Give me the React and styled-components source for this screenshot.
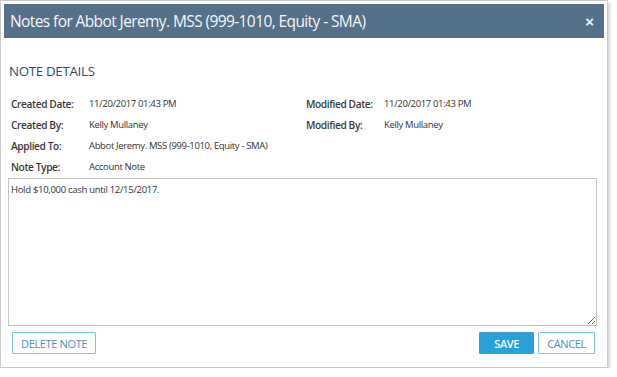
import React, { useState } from 'react';
import styled, { createGlobalStyle } from 'styled-components';

const GlobalStyle = createGlobalStyle`
  html, body {
    margin: 0;
    padding: 0;
    background: #ffffff;
  }
  body {
    font-family: "Open Sans", "Noto Sans", sans-serif;
    color: #333;
  }
`;

const Dialog = styled.div`
  width: 608px;
  height: 368px;
  border: 1px solid #c9c9c9;
  box-shadow: 2px 3px 3px rgba(0, 0, 0, 0.18);
  background: #fff;
  padding: 3px;
  box-sizing: border-box;
  display: flex;
  flex-direction: column;
`;

const Header = styled.div`
  height: 34px;
  background: #557089;
  display: flex;
  align-items: center;
  justify-content: space-between;
  padding: 0 10px 0 6px;
  flex-shrink: 0;
`;

const Title = styled.h1`
  margin: 0;
  font-size: 15.5px;
  font-weight: 400;
  color: #f4f7fa;
  letter-spacing: -0.6px;
`;

const Close = styled.button`
  border: none;
  background: none;
  padding: 0;
  color: #f0f3f6;
  font-size: 15px;
  font-weight: 700;
  cursor: pointer;
  line-height: 1;
`;

const Body = styled.div`
  flex: 1;
  display: flex;
  flex-direction: column;
  padding: 0 7px 0 4px;
`;

const SectionTitle = styled.h2`
  margin: 24px 0 13px 1px;
  font-size: 13.3px;
  font-weight: 400;
  color: #2f4c6b;
  letter-spacing: -0.3px;
`;

const DetailGrid = styled.div`
  display: grid;
  grid-template-columns: 78px 217px 78px 1fr;
  grid-auto-rows: 21px;
  align-items: center;
  padding-left: 3px;
`;

const Label = styled.span`
  font-size: 10.2px;
  font-weight: 600;
  color: #3a3a3a;
  letter-spacing: -0.4px;
`;

const Value = styled.span`
  font-size: 9.5px;
  color: #333;
  letter-spacing: -0.35px;
`;

const NoteArea = styled.textarea`
  margin-top: 1px;
  height: 148px;
  width: 100%;
  box-sizing: border-box;
  border: 1px solid #c4c4c4;
  padding: 4px 2px;
  font-family: "Open Sans", "Noto Sans", sans-serif;
  font-size: 9.5px;
  letter-spacing: -0.3px;
  color: #333;
  resize: both;
  outline: none;
`;

const Footer = styled.div`
  display: flex;
  justify-content: space-between;
  align-items: center;
  margin-top: 6px;
  padding: 0 2px 0 4px;
`;

const ButtonGroup = styled.div`
  display: flex;
  gap: 4px;
`;

const Button = styled.button`
  height: 22px;
  padding: 0 ${p => p.$pad || 10}px;
  font-family: "Open Sans", "Noto Sans", sans-serif;
  font-size: 11px;
  letter-spacing: -0.35px;
  font-weight: ${p => (p.$primary ? 600 : 400)};
  color: ${p => (p.$primary ? '#fff' : '#4b8fc0')};
  background: ${p => (p.$primary ? '#2b9fd8' : '#fff')};
  border: 1px solid ${p => (p.$primary ? '#2b9fd8' : '#7cc3ea')};
  border-radius: 1px;
  cursor: pointer;
`;

export default function App() {
  const [note, setNote] = useState('Hold $10,000 cash until 12/15/2017.');

  const rows = [
    ['Created Date:', '11/20/2017 01:43 PM', 'Modified Date:', '11/20/2017 01:43 PM'],
    ['Created By:', 'Kelly Mullaney', 'Modified By:', 'Kelly Mullaney'],
    ['Applied To:', 'Abbot Jeremy. MSS (999-1010, Equity - SMA)', '', ''],
    ['Note Type:', 'Account Note', '', ''],
  ];

  return (
    <>
      <GlobalStyle />
      <Dialog>
        <Header>
          <Title>Notes for Abbot Jeremy. MSS (999-1010, Equity - SMA)</Title>
          <Close aria-label="Close">×</Close>
        </Header>
        <Body>
          <SectionTitle>NOTE DETAILS</SectionTitle>
          <DetailGrid>
            {rows.map((r, i) => (
              <React.Fragment key={i}>
                <Label>{r[0]}</Label>
                <Value>{r[1]}</Value>
                <Label>{r[2]}</Label>
                <Value>{r[3]}</Value>
              </React.Fragment>
            ))}
          </DetailGrid>
          <NoteArea value={note} onChange={e => setNote(e.target.value)} />
          <Footer>
            <Button $pad={8}>DELETE NOTE</Button>
            <ButtonGroup>
              <Button $primary $pad={14}>SAVE</Button>
              <Button $pad={8}>CANCEL</Button>
            </ButtonGroup>
          </Footer>
        </Body>
      </Dialog>
    </>
  );
}
